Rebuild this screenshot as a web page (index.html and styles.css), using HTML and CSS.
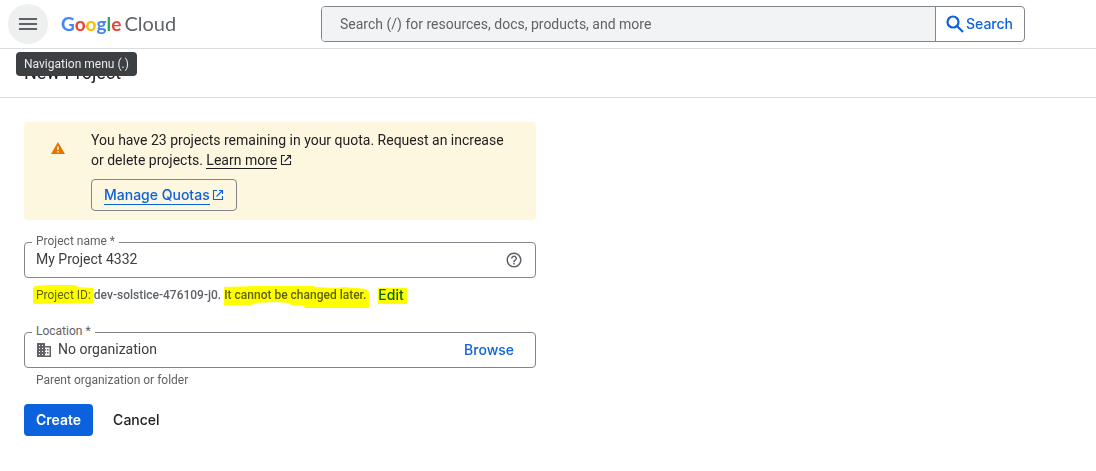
FILE: index.html
```html
<!DOCTYPE html>
<html lang="en">
<head>
<meta charset="utf-8">
<meta name="viewport" content="width=device-width, initial-scale=1">
<title>New Project – Google Cloud</title>
<link rel="stylesheet" href="styles.css">
</head>
<body>
<header class="topbar">
  <div class="brand">
    <div class="menu">
      <button class="menu-button" type="button" aria-label="Navigation menu" aria-describedby="menu-tip">
        <svg width="24" height="24" viewBox="0 0 24 24" fill="currentColor" aria-hidden="true"><path d="M3 18h18v-2H3v2zm0-5h18v-2H3v2zm0-7v2h18V6H3z"/></svg>
      </button>
      <span class="tooltip" id="menu-tip" role="tooltip">Navigation menu (.)</span>
    </div>
    <a class="logo" href="#"><span class="logo-name"><span class="blue">G</span><span class="red">o</span><span class="yellow">o</span><span class="blue">g</span><span class="green">l</span><span class="red">e</span></span> <span>Cloud</span></a>
  </div>
  <form class="search" role="search">
    <input class="search-input" type="text" aria-label="Search" placeholder="Search (/) for resources, docs, products, and more">
    <button class="search-button" type="button">
      <svg width="18" height="18" viewBox="0 0 18 18" fill="none" stroke="currentColor" stroke-width="2.2" aria-hidden="true"><circle cx="7" cy="7" r="5.500"/><path d="M11 11l6 6"/></svg>
      Search
    </button>
  </form>
</header>
<div class="titlebar"><h1 class="title">New Project</h1></div>
<main class="content">
  <section class="notice">
    <svg class="notice-icon" width="16" height="16" viewBox="0 0 16 16" aria-hidden="true"><path fill="#e37400" d="M8 2l7 12H1z"/><path fill="#fef7e0" d="M7.3 6.5h1.4v3.6H7.3zM7.3 11h1.4v1.4H7.3z"/></svg>
    <div class="notice-body">
      <p class="notice-text">You have 23 projects remaining in your quota. Request an increase or delete projects. <a class="learn" href="#"><span class="underlined">Learn more</span><svg width="12" height="12" viewBox="0 0 12 12" fill="none" stroke="currentColor" stroke-width="1.1" aria-hidden="true"><path d="M5 1.5H1.5v9h9V7M7 1.5h3.5V5M10.5 1.5L4.5 7.5"/></svg></a></p>
      <a class="quota-button" href="#"><span class="underlined">Manage Quotas</span><svg width="12" height="12" viewBox="0 0 12 12" fill="none" stroke="currentColor" stroke-width="1.1" aria-hidden="true"><path d="M5 1.5H1.5v9h9V7M7 1.5h3.5V5M10.5 1.5L4.5 7.5"/></svg></a>
    </div>
  </section>
  <form class="form">
    <div class="group">
      <div class="field">
        <label class="field-label" for="name">Project name *</label>
        <input class="field-input" id="name" type="text" value="My Project 4332">
        <button class="help" type="button" aria-label="Help">
          <svg width="18" height="18" viewBox="0 0 24 24" fill="currentColor" aria-hidden="true"><path d="M11 18h2v-2h-2v2zm1-16C6.480 2 2 6.480 2 12s4.480 10 10 10 10-4.480 10-10S17.520 2 12 2zm0 18c-4.410 0-8-3.590-8-8s3.590-8 8-8 8 3.590 8 8-3.590 8-8 8zm0-14c-2.210 0-4 1.790-4 4h2c0-1.100.9-2 2-2s2 .9 2 2c0 2-3 1.750-3 5h2c0-2.250 3-2.500 3-5 0-2.210-1.790-4-4-4z"/></svg>
        </button>
      </div>
      <p class="hint project-id">
        <span class="marked">Project ID:<svg class="marker marker-id" width="60" height="20" viewBox="0 0 60 20" aria-hidden="true"><path d="M0 4l2-2 11-1h30l2 2 15 1v15L0 20z"/></svg></span>
        <span class="medium">dev-solstice-476109-j0.</span>
        <span class="marked medium">It cannot be changed later.<svg class="marker marker-note" width="145" height="23" viewBox="0 0 145 23" aria-hidden="true"><path d="M0 2l35-1h55l1 1 21 1 8-1 23 2v2h2v17H81l-1-2-13-1-2-2-13-1-22 1-2 2H0z"/></svg></span>
        <button class="edit marked" type="button">Edit<svg class="marker marker-edit" width="29" height="16" viewBox="0 0 29 16" aria-hidden="true"><path d="M0 0h29v16H0z"/></svg></button>
      </p>
    </div>
    <div class="group">
      <div class="field">
        <label class="field-label" for="location">Location *</label>
        <svg class="org-icon" width="16" height="16" viewBox="0 0 16 16" fill="currentColor" fill-rule="evenodd" aria-hidden="true"><path d="M1 1h8v3h6v11H1zM3 3v1h1V3zM6 3v1h1V3zM3 6v1h1V6zM6 6v1h1V6zM3 9v1h1V9zM6 9v1h1V9zM3 12v1h1v-1zM6 12v1h1v-1zM9 5.500V7h1v1.500H9V10h1v1.500H9v2h4.500v-8zM11 7h1.500v1.500H11zM11 10h1.500v1.500H11z"/></svg>
        <input class="field-input" id="location" type="text" value="No organization">
        <button class="browse" type="button">Browse</button>
      </div>
      <p class="hint">Parent organization or folder</p>
    </div>
    <div class="actions">
      <button class="create" type="button">Create</button>
      <button class="cancel" type="button">Cancel</button>
    </div>
  </form>
</main>
</body>
</html>
```
FILE: styles.css
```css
* { box-sizing: border-box; }
body {
  margin: 0;
  background: #fff;
  color: #202124;
  font: 14px/20px Roboto, sans-serif;
}
button, input { font: inherit; margin: 0; }
button { padding: 0; border: 0; background: none; cursor: pointer; }
svg { display: block; flex: none; }
h1, p { margin: 0; }

.topbar {
  display: grid;
  grid-template-columns: 313px minmax(0, 704px);
  align-items: center;
  height: 49px;
  padding: 0 8px;
  border-bottom: 1px solid #dadce0;
}
.brand { display: flex; align-items: center; gap: 13px; }
.menu { position: relative; }
.menu-button {
  display: grid;
  place-items: center;
  width: 40px;
  height: 40px;
  border-radius: 50%;
  background: #eef0f0;
  color: #5f6368;
}
.tooltip {
  position: absolute;
  top: 48px;
  left: 8px;
  padding: 4px 8px;
  border-radius: 4px;
  background: #3c4043;
  color: #e8eaed;
  font-size: 12px;
  line-height: 16px;
  white-space: nowrap;
}
.logo {
  display: flex;
  align-items: baseline;
  gap: 3px;
  padding-bottom: 2px;
  color: #5f6368;
  font: 20px/24px Lato, sans-serif;
  text-decoration: none;
}
.logo-name { font-size: 19px; font-weight: 700; }
.blue { color: #4285f4; }
.red { color: #ea4335; }
.yellow { color: #fbbc04; }
.green { color: #34a853; }

.search {
  display: flex;
  height: 36px;
  border: 1px solid #80868b;
  border-radius: 4px;
  overflow: hidden;
}
.search-input {
  flex: 1;
  min-width: 0;
  padding: 0 18px;
  border: 0;
  background: #f1f3f4;
}
.search-input::placeholder { color: #5f6368; opacity: 1; }
.search-button {
  display: flex;
  align-items: center;
  gap: 2px;
  padding: 0 11px 0 10px;
  border-left: 1px solid #80868b;
}
.search-button, .quota-button, .edit, .browse, .create, .cancel {
  color: #0b62dc;
  font-family: Inter, sans-serif;
  font-weight: 500;
}

.titlebar {
  height: 49px;
  padding: 12px 24px;
  border-bottom: 1px solid #dadce0;
}
.title { font-size: 18px; line-height: 24px; font-weight: 400; }

.content { max-width: 560px; padding: 24px; }
.notice {
  display: flex;
  gap: 25px;
  padding: 8px 26px 9px;
  border-radius: 4px;
  background: #fef7e0;
}
.notice-icon { margin-top: 10px; }
.notice-body { flex: 1; }
.learn { color: inherit; text-decoration: none; }
.learn svg { display: inline-block; margin-left: 3px; vertical-align: -1px; }
.underlined { border-bottom: 1px solid currentColor; }
.quota-button {
  display: inline-flex;
  align-items: center;
  gap: 2px;
  height: 32px;
  margin-top: 9px;
  padding: 0 12px;
  border: 1px solid #80868b;
  border-radius: 4px;
  text-decoration: none;
  vertical-align: top;
}
.quota-button .underlined { line-height: 18px; }

.form { padding-top: 22px; }
.field {
  position: relative;
  display: flex;
  align-items: center;
  height: 36px;
  padding: 0 11px;
  border: 1px solid #80868b;
  border-radius: 4px;
}
.field-label {
  position: absolute;
  top: -10px;
  left: 7px;
  padding: 0 4px;
  background: #fff;
  color: #5f6368;
  font-size: 12px;
  line-height: 16px;
}
.field-input {
  flex: 1;
  min-width: 0;
  height: 32px;
  padding: 0 0 2px;
  border: 0;
  background: none;
  color: #3c4043;
}
.help { margin-right: 1px; color: #5f6368; }
.org-icon { margin-right: 6px; color: #5f6368; }
.browse { margin-right: 10px; }
.hint {
  padding: 4px 12px 0;
  color: #5f6368;
  font-size: 12px;
  line-height: 16px;
}
.project-id {
  display: flex;
  align-items: center;
  gap: 3px;
  padding-top: 7px;
}
.medium { font-weight: 500; }
.marked { position: relative; }
.marker {
  position: absolute;
  fill: #ff0;
  mix-blend-mode: multiply;
}
.marker-id { top: -3px; left: -3px; }
.marker-note { top: -2px; left: 0; }
.marker-edit { top: 3px; left: 0; }
.edit { margin-left: 9px; font-size: 14px; line-height: 20px; }
.group + .group { margin-top: 27px; }
.actions { display: flex; gap: 8px; margin-top: 16px; }
.create, .cancel { height: 32px; padding: 0 12px; border-radius: 4px; }
.create { background: #0b62dc; color: #fff; font-weight: 600; }
.cancel { color: #202124; }
```
